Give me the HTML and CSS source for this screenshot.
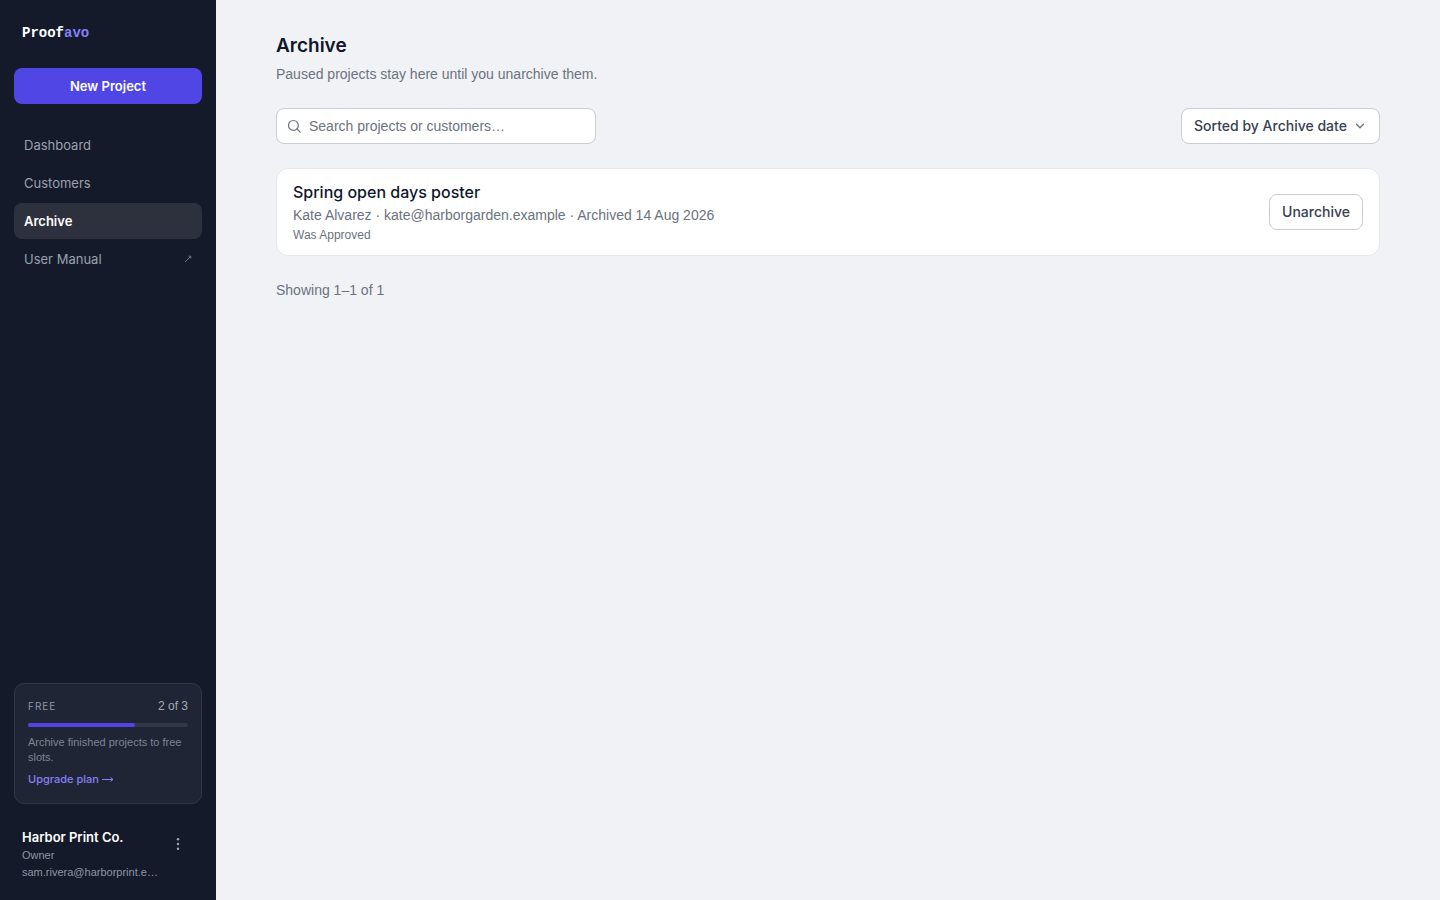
FILE: index.html
```html
<!DOCTYPE html>
<html lang="en">
<head>
    <meta charset="UTF-8">
    <meta name="viewport" content="width=device-width, initial-scale=1.0">
    <title>Archive - Proofavo</title>
    <link rel="stylesheet" href="styles.css">
</head>
<body>
    <aside class="sidebar">
        <a class="logo" href="#">Proof<span>avo</span></a>
        <button class="new-project" type="button">New Project</button>

        <nav class="nav">
            <a href="#">Dashboard</a>
            <a href="#">Customers</a>
            <a class="active" href="#" aria-current="page">Archive</a>
            <a href="#">User Manual
                <svg class="external" width="8" height="8" viewBox="0 0 8 8" fill="none" stroke="currentColor" aria-hidden="true">
                    <path d="M1 7L6.5 1.5M4.5 1.2H6.8V3.5"/>
                </svg>
            </a>
        </nav>

        <section class="plan">
            <div class="plan-head">
                <span class="plan-name">FREE</span>
                <span class="plan-count">2 of 3</span>
            </div>
            <div class="bar"><div class="bar-fill" style="width: 66.67%"></div></div>
            <p>Archive finished projects to free slots.</p>
            <a class="upgrade" href="#">Upgrade plan
                <svg width="12" height="7" viewBox="0 0 12 7" fill="none" stroke="currentColor" aria-hidden="true">
                    <path d="M0 3.5H11M8.5 1.5L11 3.5L8.5 5.5"/>
                </svg>
            </a>
        </section>

        <div class="account">
            <div class="account-text">
                <strong>Harbor Print Co.</strong>
                <span>Owner</span>
                <span title="sam.rivera@harborprint.example">sam.rivera@harborprint.e…</span>
            </div>
            <button class="menu-button" type="button" aria-label="Account menu">
                <svg width="16" height="16" viewBox="0 0 16 16" fill="currentColor" aria-hidden="true">
                    <circle cx="8" cy="3.3" r="1.2"/>
                    <circle cx="8" cy="8" r="1.2"/>
                    <circle cx="8" cy="12.7" r="1.2"/>
                </svg>
            </button>
        </div>
    </aside>

    <main>
        <h1>Archive</h1>
        <p class="intro">Paused projects stay here until you unarchive them.</p>

        <div class="toolbar">
            <label class="search">
                <svg width="16" height="16" viewBox="0 0 16 16" fill="none" stroke="currentColor" stroke-width="1.2" stroke-linecap="round" aria-hidden="true">
                    <circle cx="7.4" cy="7.4" r="4.9"/>
                    <path d="M11 11L14.2 14.2"/>
                </svg>
                <input type="text" placeholder="Search projects or customers…" aria-label="Search projects or customers">
            </label>
            <label class="sort">
                <select aria-label="Sort projects">
                    <option>Sorted by Archive date</option>
                    <option>Sorted by Name</option>
                </select>
                <svg width="10" height="10" viewBox="0 0 10 10" fill="none" stroke="currentColor" stroke-width="1.3" stroke-linecap="round" stroke-linejoin="round" aria-hidden="true">
                    <path d="M1.5 3.2L5 6.8L8.5 3.2"/>
                </svg>
            </label>
        </div>

        <article class="project">
            <div>
                <h2>Spring open days poster</h2>
                <p class="meta">Kate Alvarez · kate@harborgarden.example · Archived 14 Aug 2026</p>
                <p class="status">Was Approved</p>
            </div>
            <button class="unarchive" type="button">Unarchive</button>
        </article>

        <p class="showing">Showing 1–1 of 1</p>
    </main>
</body>
</html>
```
FILE: styles.css
```css
* {
    box-sizing: border-box;
}
body {
    display: flex;
    min-height: 100vh;
    margin: 0;
    background-color: #f1f2f6;
    color: #0f172a;
    font-family: "Liberation Sans", Arial, sans-serif;
    font-size: 14px;
    line-height: 20px;
}
h1, h2, p {
    margin: 0;
}
a {
    text-decoration: none;
}
button, input, select {
    font: inherit;
}
h1, h2, button, select, strong, .nav, .plan-name, .upgrade {
    font-family: Inter, Arial, sans-serif;
}
button {
    cursor: pointer;
}

/* Sidebar */
.sidebar {
    display: flex;
    flex-direction: column;
    flex: none;
    position: sticky;
    top: 0;
    width: 216px;
    height: 100vh;
    padding: 23px 14px 19px;
    background-color: #141a29;
    color: #8f96a5;
}
.logo {
    margin: 0 8px 25px;
    color: #fff;
    font-family: "Liberation Mono", monospace;
    font-size: 14px;
    font-weight: 700;
    line-height: 20px;
}
.logo span {
    color: #8580f5;
}
.new-project {
    height: 36px;
    border: none;
    border-radius: 8px;
    background-color: #5046e5;
    color: #fff;
    font-size: 13px;
    font-weight: 600;
}
.nav {
    display: flex;
    flex-direction: column;
    gap: 2px;
    margin-top: 23px;
}
.nav a {
    display: flex;
    align-items: center;
    justify-content: space-between;
    height: 36px;
    padding: 0 10px;
    border-radius: 8px;
    color: #9aa1af;
    font-size: 13px;
}
.nav .active {
    background-color: #2d313e;
    color: #fff;
    font-weight: 600;
}
.external {
    opacity: 0.7;
}
.plan {
    margin-top: auto;
    padding: 12px 13px 16px;
    border: 1px solid #303644;
    border-radius: 10px;
    background-color: #1f2534;
    font-size: 11px;
    line-height: 15px;
}
.plan-head {
    display: flex;
    align-items: center;
    justify-content: space-between;
    line-height: 20px;
}
.plan-name {
    font-size: 10px;
    letter-spacing: 1px;
}
.plan-count {
    color: #a4aab7;
    font-size: 12px;
}
.bar {
    height: 4px;
    margin: 7px 0 8px;
    border-radius: 2px;
    background-color: #323846;
}
.bar-fill {
    height: 100%;
    border-radius: 2px;
    background-color: #5046e5;
}
.plan p {
    color: #7d8493;
}
.upgrade {
    display: inline-block;
    margin-top: 7px;
    color: #8580f5;
    font-weight: 500;
}
.account {
    display: flex;
    align-items: flex-start;
    margin-top: 24px;
    padding: 0 8px;
}
.account-text {
    flex: 1;
    min-width: 0;
    font-size: 11px;
    line-height: 17px;
}
.account-text strong, .account-text span {
    display: block;
    overflow: hidden;
    text-overflow: ellipsis;
    white-space: nowrap;
}
.account-text strong {
    color: #fff;
    font-size: 13px;
    font-weight: 600;
    line-height: 19px;
}
.menu-button {
    display: flex;
    align-items: center;
    justify-content: center;
    width: 32px;
    height: 32px;
    padding: 0;
    border: none;
    background: none;
    color: #a4aab7;
}

/* Page */
main {
    flex: 1;
    min-width: 0;
    padding: 32px 60px;
}
h1 {
    font-size: 19px;
    font-weight: 600;
    line-height: 28px;
}
.intro, .meta, .showing {
    color: #6b7280;
}
.intro {
    margin-top: 4px;
}
.toolbar {
    display: flex;
    align-items: center;
    justify-content: space-between;
    gap: 16px;
    margin: 24px 0;
}
.search, .sort {
    display: flex;
    align-items: center;
    height: 36px;
    border: 1px solid #c9ccd3;
    border-radius: 8px;
    background-color: #fff;
    color: #6b7280;
}
.search {
    gap: 7px;
    width: 320px;
    padding: 0 9px;
}
.search input {
    flex: 1;
    min-width: 0;
    padding: 0;
    border: none;
    outline: none;
    background: none;
    color: #111827;
}
.search input::placeholder {
    color: #6b7280;
}
.sort {
    position: relative;
}
.sort select {
    height: 34px;
    padding: 0 32px 0 12px;
    border: none;
    outline: none;
    background: none;
    color: #374151;
    font-weight: 500;
    appearance: none;
}
.sort svg {
    position: absolute;
    right: 14px;
    pointer-events: none;
}
.project {
    display: flex;
    align-items: center;
    justify-content: space-between;
    gap: 16px;
    padding: 10px 16px;
    border: 1px solid #e5e7eb;
    border-radius: 12px;
    background-color: #fff;
}
h2 {
    font-size: 16px;
    font-weight: 500;
    line-height: 26px;
}
.status {
    color: #6b7280;
    font-size: 12px;
}
.unarchive {
    flex: none;
    height: 36px;
    padding: 0 12px;
    border: 1px solid #c9ccd3;
    border-radius: 8px;
    background-color: #fff;
    color: #374151;
    font-weight: 500;
}
.showing {
    margin-top: 24px;
}
```
